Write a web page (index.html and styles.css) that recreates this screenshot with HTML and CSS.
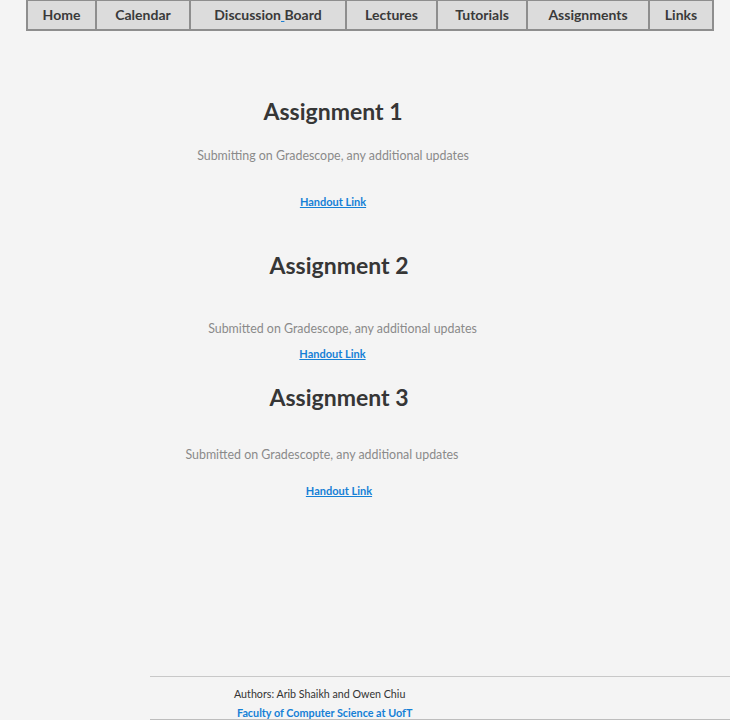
FILE: index.html
```html
<!DOCTYPE html>
<html>
<head>
<meta charset="utf-8">
<link rel="stylesheet" href="styles.css">
</head>
<body>
<nav class="nav">
  <a class="tab tab-home"><span>Home</span></a>
  <a class="tab tab-cal"><span>Calendar</span></a>
  <a class="tab tab-disc"><span>Discussion<span class="gap"> </span>Board</span></a>
  <a class="tab tab-lec"><span>Lectures</span></a>
  <a class="tab tab-tut"><span>Tutorials</span></a>
  <a class="tab tab-asg"><span>Assignments</span></a>
  <a class="tab tab-links"><span>Links</span></a>
</nav>
<main class="main">
  <section class="asg asg1">
    <h2 class="title">Assignment 1</h2>
    <p class="desc">Submitting on Gradescope, any additional updates</p>
    <a class="handout" href="#">Handout Link</a>
  </section>
  <section class="asg asg2">
    <h2 class="title">Assignment 2</h2>
    <p class="desc">Submitted on Gradescope, any additional updates</p>
    <a class="handout" href="#">Handout Link</a>
  </section>
  <section class="asg asg3">
    <h2 class="title">Assignment 3</h2>
    <p class="desc">Submitted on Gradescopte, any additional updates</p>
    <a class="handout" href="#">Handout Link</a>
  </section>
</main>
<footer class="footer">
  <p class="authors">Authors: Arib Shaikh and Owen Chiu</p>
  <a class="faculty" href="#">Faculty of Computer Science at UofT</a>
</footer>
</body>
</html>
```
FILE: styles.css
```css
html, body {
  margin: 0;
  padding: 0;
  background: #f4f4f4;
  font-family: Lato, "Open Sans", sans-serif;
  color: #333;
}
body {
  width: 730px;
  height: 720px;
  overflow: hidden;
  display: flex;
  flex-direction: column;
}
.nav {
  display: flex;
  margin-left: 26px;
  width: 688px;
  height: 31px;
  box-sizing: border-box;
  border: 2px solid #8e8e8e;
  border-top-width: 1px;
  background: #dcdcdc;
}
.tab {
  display: flex;
  align-items: center;
  justify-content: center;
  padding-bottom: 2px;
  font-weight: bold;
  font-size: 14px;
  color: #3a3a3a;
  border-right: 2px solid #8e8e8e;
  box-sizing: border-box;
}
.tab-home { width: 69px; }
.tab-cal { width: 94px; }
.tab-disc { width: 156px; }
.tab-lec { width: 91px; }
.tab-tut { width: 90px; }
.tab-asg { width: 122px; }
.tab-links { flex: 1; border-right: none; }
.gap {
  text-decoration: underline;
  text-decoration-color: #1a7fd4;
}
.main {
  display: flex;
  flex-direction: column;
  align-items: center;
  flex: 1;
}
.asg {
  display: flex;
  flex-direction: column;
  align-items: center;
}
.title {
  margin: 0;
  font-size: 23px;
  font-weight: bold;
  color: #363636;
}
.desc {
  margin: 0;
  font-size: 12.4px;
  color: #8a8a8a;
}
.handout {
  font-size: 11px;
  font-weight: bold;
  color: #1680d6;
  text-decoration: underline;
}
.asg1 { margin-top: 66px; margin-left: -64px; }
.asg1 .desc { margin-top: 23px; }
.asg1 .handout { margin-top: 32px; }
.asg2 { margin-top: 43px; margin-left: -52px; }
.asg2 .desc { margin-top: 42px; margin-left: 7px; }
.asg2 .handout { margin-top: 11px; margin-left: -13px; }
.asg3 { margin-top: 23px; margin-left: -52px; }
.asg3 .desc { margin-top: 36px; margin-left: -34px; }
.asg3 .handout { margin-top: 22px; }
.footer {
  margin-left: 150px;
  border-top: 1px solid #c8c8c8;
  padding-top: 10px;
  padding-left: 84px;
  height: 32px;
  border-bottom: 1px solid #bdbdbd;
}
.authors {
  margin: 0;
  font-size: 10.7px;
  color: #333;
}
.faculty {
  display: block;
  margin-top: 6px;
  margin-left: 3px;
  font-size: 10.8px;
  font-weight: bold;
  color: #1680d6;
  text-decoration: none;
}
```
